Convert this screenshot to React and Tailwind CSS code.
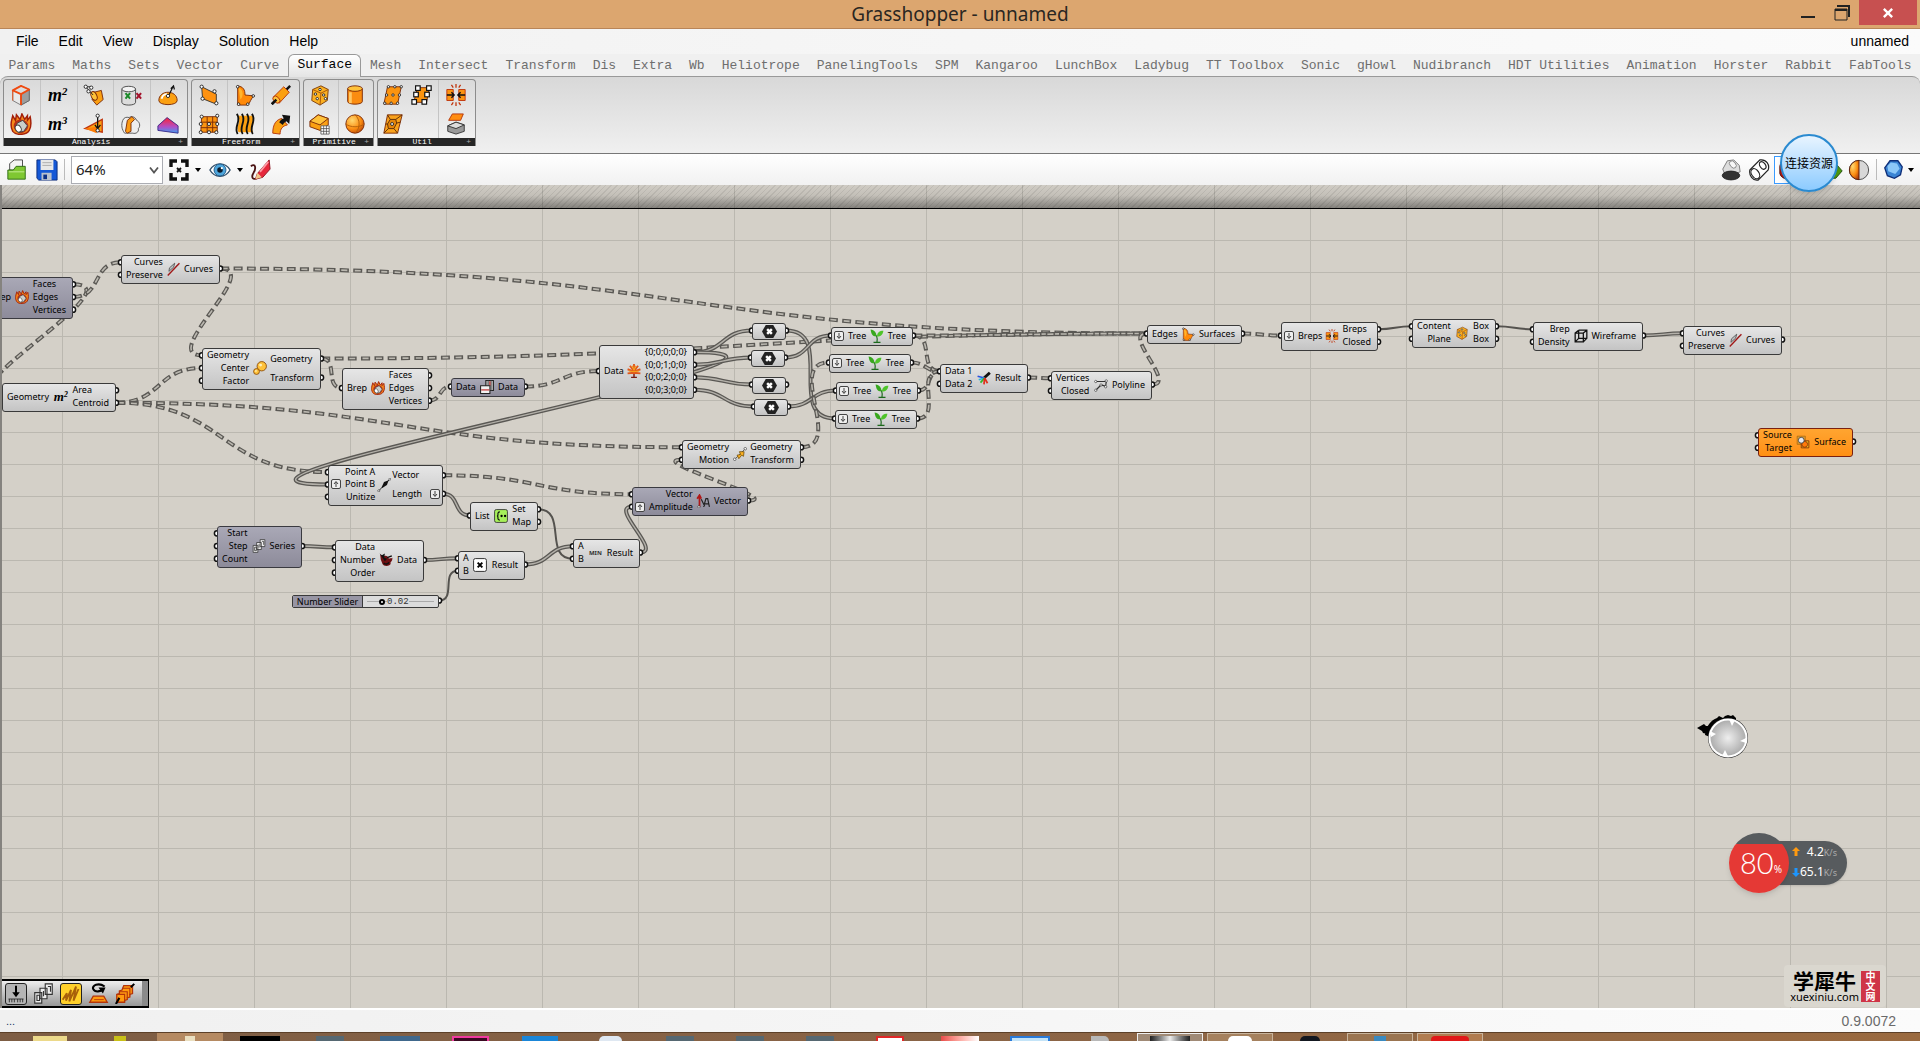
import React, { useState } from "react";

const TABS = [
  "Params", "Maths", "Sets", "Vector", "Curve", "Surface", "Mesh", "Intersect", "Transform",
  "Dis", "Extra", "Wb", "Heliotrope", "PanelingTools", "SPM", "Kangaroo", "LunchBox", "Ladybug",
  "TT Toolbox", "Sonic", "gHowl", "Nudibranch", "HDT Utilities", "Animation", "Horster",
  "Rabbit", "FabTools",
];

const MENUS = ["File", "Edit", "View", "Display", "Solution", "Help"];

const dots = (pts, r = 1.8) =>
  pts.map(([x, y]) => (
    <circle key={x + "-" + y} cx={x} cy={y} r={r} fill="#fff" stroke="#222" strokeWidth="1" />
  ));

// all drawings live on a 24x24 box
const ICONS = {
  boxEdges: (
    <g strokeLinejoin="round">
      <path d="M3 7l9-5 9 4v12l-9 5-9-5z" fill="#e9e9e9" stroke="#777" />
      <path d="M12 11l9-5v12l-9 5z" fill="#9d9d9d" stroke="#666" />
      <path d="M3 7l9-5 9 4-9 5zM12 11v12" fill="#ddd" stroke="#f04a10" strokeWidth="2" />
      <path d="M3 7v11" stroke="#f04a10" />
    </g>
  ),
  fire: (
    <g>
      <path d="M3 20C-1 13 2 8 3 3l3 5 1-6 4 5 2-6 3 6 3-4 0 5 3-4c1 5 2 10-1 15-3 5-14 6-18 1z" fill="#f58a1b" stroke="#a3200a" strokeWidth="1.6" />
      <path d="M4 14c0-5 5-7 8-7s8 3 8 7-4 8-8 8-8-3-8-8z" fill="#b8301a" />
      <path d="M8 11l6-3 5 6-4 6-6 1-3-5z" fill="#c9cdca" stroke="#444" />
      <ellipse cx="9" cy="17" rx="3" ry="4" transform="rotate(-30 9 17)" fill="#fff" stroke="#444" />
    </g>
  ),
  deconstruct: (
    <g>
      <path d="M12 9l8-2 2 10-7 6-5-6z" fill="#fba012" stroke="#7a2a08" />
      <ellipse cx="12" cy="13" rx="3" ry="5" transform="rotate(-25 12 13)" fill="#ffc23a" stroke="#7a2a08" />
      <path d="M3 3l8 9M3 3l5 0" stroke="#222" />
      {dots([[3, 3], [9, 4], [6, 8]])}
    </g>
  ),
  volume: (
    <g>
      <path d="M2 17L21 7v14z" fill="#fba012" stroke="#c0340c" strokeWidth="1.4" />
      <path d="M2 17l13-2 0 7z" fill="#ff7d05" />
      <path d="M16 3v14m-3-4l3 4 3-4" stroke="#111" fill="none" strokeWidth="1.4" />
      {dots([[16, 3], [16, 19]])}
    </g>
  ),
  inclusion: (
    <g>
      <path d="M2 6v14c0 4 15 4 15 0V6" fill="#dcdcdc" stroke="#444" />
      <ellipse cx="9.500" cy="5.500" rx="7.500" ry="3" fill="#f3f3f3" stroke="#444" />
      <path d="M6 10l5 6m0-6l-5 6" stroke="#1c8a2a" strokeWidth="2.200" />
      <path d="M18 10l5 6m0-6l-5 6" stroke="#a3122b" strokeWidth="2.200" />
    </g>
  ),
  domePoint: (
    <g>
      <path d="M2 18c0-12 20-12 20 0 0 6-20 6-20 0z" fill="#fba012" stroke="#7a2a08" />
      <path d="M5 16c1-4 4-5 6-5" stroke="#fff" strokeWidth="2" fill="none" />
      <path d="M13 12L18 2m-3 3l3-3 1 4" stroke="#111" fill="none" strokeWidth="1.300" />
      {dots([[12, 13]])}
    </g>
  ),
  bubbles: (
    <g>
      <path d="M3 8c-2 5-1 10 2 14l9 0c3 1 7-1 6-5 3-3 1-8-2-9-1-4-6-5-8-3-3-1-6 0-7 3z" fill="#eee" stroke="#555" />
      <path d="M8 8l5-4 3 3-4 4v9l-4 2-2-2z" fill="#fb9a12" stroke="#7a2a08" />
    </g>
  ),
  gradientSurf: (
    <g>
      <path d="M1 14l10-9 12 9v8L1 19z" fill="url(#gh-heat)" stroke="#3a2a88" />
    </g>
  ),
  quad: (
    <g>
      <path d="M4 3l16 8v11L5 16z" fill="#ff9210" stroke="#333" />
      {dots([[4, 3], [18, 8], [20, 21], [5, 16]])}
    </g>
  ),
  edgeSurf: (
    <g>
      <path d="M4 2c6 1 8 4 8 10l10 1c-4 3-4 7-7 10H4z" fill="#ff8a0a" stroke="#7a2a08" />
      <path d="M5 4c5 2 6 8 2 13z" fill="#ffb52d" />
      {dots([[4, 3], [21, 13], [5, 22], [15, 22]], 1.400)}
    </g>
  ),
  pipe: (
    <g>
      <path d="M2 22L22 2" stroke="#111" strokeWidth="2.600" />
      <path d="M4 14L15 3l6 6L10 21z" fill="#fba012" stroke="#b3340a" />
      <ellipse cx="7" cy="17" rx="3" ry="4.500" transform="rotate(-45 7 17)" fill="#ffc23a" stroke="#b3340a" />
      <path d="M2 22l5-5" stroke="#111" strokeWidth="2.600" />
    </g>
  ),
  gridSurf: (
    <g>
      <path d="M4 4h17v17H3z" fill="#fb9410" stroke="#7a2a08" />
      <path d="M10 4v17M16 4v17M3 10h18M3 16h18" stroke="#7a2a08" />
      {dots([[4, 4], [12, 12], [21, 3], [3, 21], [20, 21], [21, 12], [12, 21], [3, 12]], 1.700)}
    </g>
  ),
  waves: (
    <g>
      <path d="M4 3c5 6-3 12 1 18h16c-4-6 4-12-1-18z" fill="#fba012" />
      <path d="M3 1c6 7-4 14 1 22M8.500 1c6 7-4 14 1 22M14 1c6 7-4 14 1 22M19.500 1c6 7-4 14 1 22" stroke="#111" strokeWidth="2" fill="none" />
    </g>
  ),
  sweepArrow: (
    <g>
      <path d="M3 22C3 12 7 7 13 6l6 7c-5 1-8 4-8 10z" fill="#fba012" stroke="#b3340a" />
      <path d="M10 10c2-3 4-4 5-4l-2-4 9 1-1 9-3-3c-2 1-3 2-4 4z" fill="#111" />
    </g>
  ),
  die: (
    <g>
      <path d="M4 6l9-4 8 4-1 12-8 5-9-5z" fill="#fbb021" stroke="#7a3a08" />
      <path d="M4 6l9 4 8-4M13 10l-1 13" stroke="#a3500a" fill="none" />
      {dots([[7, 11], [9, 16], [12, 6], [16, 12], [18, 16]], 1.300)}
    </g>
  ),
  cylinder: (
    <g>
      <path d="M4 5v14c0 4 16 4 16 0V5" fill="#fb8c10" stroke="#7a2a08" />
      <path d="M7 9v12" stroke="#ffc766" strokeWidth="3" />
      <ellipse cx="12" cy="5" rx="8" ry="3" fill="#ffc23a" stroke="#7a2a08" />
    </g>
  ),
  boxGrid: (
    <g>
      <path d="M1 9l9-7 11 4v7l-9 6-11-4z" fill="#fba012" stroke="#7a2a08" />
      <path d="M1 9l11 4 9-7-11-4z" fill="#ffc23a" stroke="#7a2a08" />
      <path d="M13 14h9v9h-9zM16 14v9m3-9v9m-6-6h9m-9 3h9" fill="#fff" stroke="#444" strokeWidth=".8" />
    </g>
  ),
  sphere: (
    <g>
      <circle cx="12" cy="12" r="10" fill="url(#gh-orange)" stroke="#7a2a08" />
      <path d="M12 2c6 5 6 15 0 20M2 12c5 4 15 4 20 0" stroke="#b3600a" fill="none" />
    </g>
  ),
  utilDivide: (
    <g>
      <path d="M6 3h15l-4 19H2z" fill="#fb9410" stroke="#7a2a08" />
      {dots([[7, 3], [14, 3], [21, 3], [5, 12], [12, 12], [19, 12], [3, 21], [10, 21], [17, 21]], 1.300)}
    </g>
  ),
  utilFrames: (
    <g>
      <path d="M7 4h13l-3 16H3z" fill="#fb9410" stroke="#7a2a08" />
      {[[5, 2], [17, 2], [3, 9], [15, 9], [1, 17], [12, 17]].map(([x, y]) => (
        <rect key={x + "-" + y} x={x} y={y} width="5" height="5" fill="#fff" stroke="#111" strokeWidth="1.300" />
      ))}
    </g>
  ),
  capping: (
    <g>
      <path d="M2 6h7v12H2zM15 6h7v12h-7z" fill="#fb9410" stroke="#c0340c" />
      <path d="M2 12h8m-3-3l3 3-3 3M22 12h-8m3-3l-3 3 3 3" stroke="#111" fill="none" strokeWidth="1.500" />
      <path d="M12 0v4M7 1l2 3M17 1l-2 3M12 20v4M7 23l2-3M17 23l-2-3" stroke="#c0340c" strokeWidth="1.400" />
    </g>
  ),
  utilPanel: (
    <g>
      <path d="M6 2h16l-5 20H2z" fill="#f9a21b" stroke="#7a2a08" />
      <path d="M9 7h6l1 4-3 6H7l-1-5zM6 2l3 5M22 2l-7 5M16 11l4-1M13 17l4 5M7 17l-5 5M6 12l-2 0" fill="#e5860a" stroke="#5a2a08" />
      {dots([[11, 12]], 1.600)}
    </g>
  ),
  liftedBox: (
    <g>
      <path d="M8 1h12l-3 7H4z" fill="#ff8d12" stroke="#b3340a" />
      <path d="M3 14l9-4 9 3v7l-9 3-9-3z" fill="#999" stroke="#333" />
      <path d="M3 14l9 3 9-4-9-3z" fill="#ddd" stroke="#333" />
    </g>
  ),
  curveClean: (
    <g>
      <path d="M6 10l9-8-2 7-8 7zM12 14l8-9" fill="#bcc3c4" stroke="#555" strokeWidth="1.500" />
      <path d="M3 23L23 2" stroke="#a01a1a" strokeWidth="2.400" />
    </g>
  ),
  balls: (
    <g>
      <circle cx="15" cy="9" r="8" fill="#ffc23a" stroke="#8a4a08" strokeWidth="1.500" />
      <circle cx="6" cy="18" r="5" fill="#ffc23a" stroke="#8a4a08" strokeWidth="1.500" />
      <circle cx="13" cy="7" r="2.500" fill="#fff0b8" />
      <circle cx="5" cy="17" r="1.500" fill="#fff0b8" />
    </g>
  ),
  flip: (
    <g>
      <path d="M10 1h13v17H10z" fill="#bbb" stroke="#222" strokeWidth="1.800" />
      <path d="M14 1v17M19 1v17" stroke="#555" strokeWidth="1.500" />
      <path d="M17 2v8" stroke="#c02a2a" strokeWidth="2" />
      <path d="M1 10h16v13H1z" fill="#f2f2f2" stroke="#222" strokeWidth="1.800" />
      <path d="M2 17h14" stroke="#c02a2a" strokeWidth="2" />
    </g>
  ),
  tree: (
    <g>
      <path d="M12 24V10M7 23h10" stroke="#7a1a10" strokeWidth="2.500" />
      <path d="M12 15L1 16M12 13L1 9M12 12L5 3M12 12V0M12 12l7-9M12 13l11-4M12 15l11 1" stroke="#e0561a" strokeWidth="3.200" />
      <path d="M12 11l-3-8m3 8l3-8M12 13L3 12m9 1l9-1" stroke="#f6a01b" strokeWidth="2" />
    </g>
  ),
  sprout: (
    <g>
      <path d="M12 22c1-6 0-8-1-11M6 23h12" stroke="#1c6a1c" strokeWidth="2" fill="none" />
      <path d="M11 13C3 13 2 7 1 1c7 1 10 5 10 12z" fill="#38a81e" />
      <path d="M12 13c0-7 4-10 11-10-1 6-4 10-11 10z" fill="#4fc42a" />
    </g>
  ),
  moveArrow: (
    <g>
      <path d="M3 21L21 3" stroke="#555" strokeWidth="1.500" />
      <path d="M7 14l6-1-2-5h8l-1 8-3-2-5 6z" fill="#fbb021" stroke="#6a4a08" strokeWidth="1.300" />
      {dots([[3, 21], [21, 3]], 2.200)}
    </g>
  ),
  merge: (
    <g fill="none" strokeWidth="3">
      <path d="M12 12L22 3" stroke="#111" strokeWidth="5" />
      <path d="M13 12L1 9" stroke="#2b52e0" />
      <path d="M13 12L3 15" stroke="#28b7d8" />
      <path d="M13 12l-7 8" stroke="#34b52c" />
      <path d="M13 12l-1 11" stroke="#e0301c" />
      <path d="M13 12l5 9" stroke="#e0301c" />
    </g>
  ),
  polyline: (
    <g>
      <path d="M3 6h18l-1 8-8-2-9 9" fill="none" stroke="#333" strokeWidth="2" />
      {dots([[3, 6], [21, 5], [20, 15], [12, 12], [3, 21]], 2)}
    </g>
  ),
  wireframe: (
    <g fill="none" stroke="#111" strokeWidth="2.200">
      <path d="M2 7h14v15H2zM8 2h14v14l-6 6M2 7l6-5M16 7l6-5M8 2v14h14M8 16l-6 6" />
    </g>
  ),
  vectorPts: (
    <g>
      <path d="M3 22L21 3" stroke="#222" strokeWidth="1.600" />
      <path d="M8 16l4-9 8-3-3 8-8 5z" fill="#111" />
      {dots([[3, 22], [22, 2]], 1.800)}
    </g>
  ),
  setList: (
    <g>
      <rect x="1" y="1" width="22" height="22" rx="3" fill="#a6f05a" stroke="#333" strokeWidth="1.500" />
      <path d="M10 5c-6 0-1 7-5 7 4 0-1 7 5 7" fill="none" stroke="#111" strokeWidth="2" />
      <circle cx="13" cy="12" r="2" />
      <circle cx="19" cy="12" r="2" />
    </g>
  ),
  series: (
    <g fill="#eee" stroke="#333" strokeWidth="1.300">
      <path d="M14 1h8v12h-8zM8 6h8v12H8zM2 11h8v12H2z" />
      <path d="M4.500 14h3v6h-3zM12 9v6M17 4h3v6" fill="none" />
    </g>
  ),
  jitter: (
    <g>
      <path d="M2 2l5 4c5-3 9 0 10 4 3-2 4 0 6-2 0 8-4 6-3 10 0 5-12 6-14 1l-3-8z" fill="#6d1012" />
      <path d="M1 1l4 3 5-3-1 7 5 2-4 4z" fill="#111" />
      <path d="M14 8l8-3M8 17c3 3 8 2 9-1" stroke="#111" strokeWidth="2.500" fill="none" />
    </g>
  ),
  multiply: (
    <g>
      <rect x="1" y="1" width="22" height="22" rx="3" fill="#fff" stroke="#333" strokeWidth="1.700" />
      <path d="M8 8l8 8m0-8l-8 8" stroke="#000" strokeWidth="3.400" />
    </g>
  ),
  amplitude: (
    <g>
      <path d="M6 22V3M2 8l4-6 3 6" stroke="#b01818" strokeWidth="3" fill="none" />
      <path d="M9 9l6 12M13 22l4-14h3l3 14M15 17h7" stroke="#222" strokeWidth="2" fill="none" />
      {dots([[5, 22]], 2)}
    </g>
  ),
  morph: (
    <g>
      <path d="M2 2h14v14H2z" fill="#d99a30" stroke="#9a5a08" />
      <path d="M9 10h13v12H9z" fill="#ffcf1e" stroke="#7a2a08" strokeWidth="1.500" />
      <circle cx="15" cy="16" r="5" fill="#ff7a0a" stroke="#7a2a08" strokeWidth="1.300" />
      <circle cx="9" cy="9" r="5" fill="#e8eaf2" stroke="#333" strokeWidth="1.300" />
    </g>
  ),
  open: (
    <g>
      <path d="M4 12V5l5-4h9v12z" fill="#f4f4f4" stroke="#444" />
      <path d="M2 12h6l3-4h10v14H2z" fill="#7fc832" stroke="#2c6a14" />
      <path d="M3 14h17" stroke="#c9f09a" />
    </g>
  ),
  save: (
    <g>
      <path d="M1 1h20l2 2v20H3l-2-2z" fill="#1558d6" stroke="#0a2a7a" />
      <path d="M5 1h14v11H5z" fill="#e8e8e8" />
      <path d="M7 4h10M7 7h10" stroke="#aaa" />
      <path d="M6 15h11v8H6z" fill="#b9c0cc" />
      <path d="M8 17h4v5H8z" fill="#0c2f86" />
    </g>
  ),
  extents: (
    <g fill="none" stroke="#111" strokeWidth="3.400">
      <path d="M4 9V3h6M14 3h6v6M20 15v6h-6M10 21H4v-6" />
      <path d="M10 10l4 4m0-4l-4 4" strokeWidth="1.800" />
    </g>
  ),
  eye: (
    <g>
      <path d="M1 12C6 3 18 3 23 12 18 21 6 21 1 12z" fill="#fff" stroke="#33506a" strokeWidth="1.500" />
      <circle cx="12" cy="12" r="6.500" fill="#4ea6dc" stroke="#1c5a8a" />
      <circle cx="12" cy="12" r="3" fill="#0c1a2a" />
      <circle cx="14" cy="10" r="1.200" fill="#fff" />
    </g>
  ),
  pencil: (
    <g>
      <path d="M2 8c5-4 6 2 3 7s-1 8 4 6" fill="none" stroke="#4a1414" strokeWidth="2" />
      <path d="M9 16L22 1l1 10-8 9-8 2z" fill="#e6283c" stroke="#8a1420" />
      <path d="M9 15l5 5-7 2z" fill="#f2c48a" />
      <path d="M12 14l9-11" stroke="#ff9aa4" strokeWidth="2" />
    </g>
  ),
  cylShadow: (
    <g>
      <path d="M3 11l5-9 7-1 6 6 1 7-8 3-9-1z" fill="#ddd" stroke="#777" />
      <ellipse cx="14" cy="6" rx="3" ry="4.500" transform="rotate(-40 14 6)" fill="#f7f7f7" stroke="#888" />
      <ellipse cx="12" cy="18" rx="9.500" ry="4.800" fill="#333" stroke="#222" />
    </g>
  ),
  cylWire: (
    <g fill="#fff" stroke="#222" strokeWidth="1.300">
      <path d="M2 12L13 1c7-1 11 5 9 11L11 23C5 24 1 18 2 12z" />
      <ellipse cx="8" cy="16" rx="4" ry="6" transform="rotate(-35 8 16)" />
      <ellipse cx="16" cy="7" rx="3" ry="4.500" transform="rotate(-35 16 7)" />
    </g>
  ),
  cylRed: <path d="M2 8c0-8 18-8 20 0v8c-2 8-18 8-20 0z" fill="#c21a10" stroke="#4a0a08" />,
  cylGreen: <path d="M1 5h14l7 8-7 8H1z" fill="#4f9a10" stroke="#1c4a08" />,
  halfSphere: (
    <g>
      <circle cx="12" cy="12" r="10.500" fill="#d8d8d8" stroke="#444" />
      <path d="M12 1.500a10.500 10.500 0 000 21z" fill="url(#gh-orange)" stroke="#5a1a08" />
    </g>
  ),
  bluePoly: (
    <g>
      <path d="M8 2l9 0 5 7-2 9-7 4-8-3-3-9z" fill="#3a84d4" stroke="#0e2e78" strokeWidth="1.500" />
      <path d="M9 4l7 1 3 6-5 6-8-3-1-6z" fill="#8cc8f8" />
    </g>
  ),
  arrowDownBtn: (
    <g>
      <path d="M12 2v12" stroke="#000" strokeWidth="2.400" />
      <path d="M7.500 10h9L12 16z" />
      <path d="M3 18h18M4 18v4m3-4v4m3-4v4m4-4v4m3-4v4m3-4v4" stroke="#222" />
    </g>
  ),
  scribble: <path d="M2 19l5-8-1 9 6-13-2 14 8-18-3 17 6-14" fill="none" stroke="#a8600a" strokeWidth="2.200" />,
  refresh: (
    <g>
      <path d="M19 4C12-1 4 3 6 7s9 3 11 0" fill="none" stroke="#000" strokeWidth="2.400" />
      <path d="M12 5h8l-3 7z" />
      <path d="M6 15h12l4 7H2z" fill="#ff9a10" stroke="#b3340a" strokeWidth="1.500" />
      <path d="M7 19h11" stroke="#b3340a" />
    </g>
  ),
  layers: (
    <g>
      <path d="M10 3h10v9l-3 1v3l-3 1v2l-3 1v2H2v-9l3-1V9l3-1z" fill="#ff9a10" stroke="#b3340a" strokeWidth="1.500" />
      <path d="M8 6h9v8M5 10h9v7M2 13h9v8" fill="none" stroke="#b3340a" strokeWidth="1.300" />
      <path d="M1 24l4-7M18 5l4-4" stroke="#000" strokeWidth="2.400" />
    </g>
  ),
};

function Icon({ name, className = "size-[22px]" }) {
  return (
    <svg viewBox="0 0 24 24" className={`shrink-0 ${className}`} aria-hidden="true">
      {ICONS[name]}
    </svg>
  );
}

function Power({ n, className }) {
  return (
    <span className={`font-['Liberation_Serif',serif] font-bold italic leading-none text-black ${className}`}>
      m<sup className="text-[60%]">{n}</sup>
    </span>
  );
}

const RIBBON = [
  {
    name: "Analysis",
    width: "w-[185px]",
    cols: [["boxEdges", "fire"], ["m2", "m3"], ["deconstruct", "volume"], ["inclusion", "bubbles"], ["domePoint", "gradientSurf"]],
  },
  { name: "Freeform", width: "w-[109px]", cols: [["quad", "gridSurf"], ["edgeSurf", "waves"], ["pipe", "sweepArrow"]] },
  { name: "Primitive", width: "w-[71px]", cols: [["die", "boxGrid"], ["cylinder", "sphere"]] },
  { name: "Util", width: "w-[99px]", cols: [["utilDivide", "utilPanel", "utilFrames"], ["capping", "liftedBox"]] },
];

function RibbonGroup({ name, width, cols }) {
  return (
    <section className={`flex flex-col overflow-hidden rounded-t border border-[#8c8c8c] border-b-0 bg-linear-to-b from-[#dadada] to-[#f4f4f4] ${width}`}>
      <div className="flex flex-1 divide-x divide-[#c4c4c4]">
        {cols.map((icons, i) => (
          <div
            key={i}
            className={`grid grow grid-flow-col grid-rows-2 place-items-center pr-0.5 ${icons.length > 2 ? "grid-cols-2" : ""}`}
          >
            {icons.map((icon) => (
              <button key={icon} title={icon} className="flex size-6 items-center justify-center">
                {icon === "m2" || icon === "m3" ? <Power n={icon[1]} className="text-[18px]" /> : <Icon name={icon} />}
              </button>
            ))}
          </div>
        ))}
      </div>
      <div className="flex h-2 items-center bg-[#262626] font-['Liberation_Mono',monospace] text-[8px] leading-[8px] text-white">
        <span className="flex-1 text-center">{name}</span>
        <span className="pr-1 text-[#aaa]">+</span>
      </div>
    </section>
  );
}

const NODES = [
  { id: "brep0", x: -14, y: 92, w: 87, h: 42, tone: "dark", left: ["Brep"], icon: "fire", right: ["Faces", "Edges", "Vertices"] },
  { id: "curves1", x: 121, y: 70, w: 99, h: 29, left: ["Curves", "Preserve"], icon: "curveClean", right: ["Curves"] },
  { id: "area", x: 2, y: 198, w: 114, h: 29, left: ["Geometry"], icon: "m2", right: ["Area", "Centroid"] },
  { id: "scale", x: 202, y: 163, w: 119, h: 42, left: ["Geometry", "Center", "Factor"], icon: "balls", right: ["Geometry", "Transform"] },
  { id: "brep1", x: 342, y: 183, w: 87, h: 42, left: ["Brep"], icon: "fire", right: ["Faces", "Edges", "Vertices"] },
  { id: "flip", x: 451, y: 193, w: 74, h: 19, tone: "dark", left: ["Data"], icon: "flip", right: ["Data"] },
  { id: "explode", x: 599, y: 160, w: 95, h: 54, left: ["Data"], icon: "tree", right: ["{0;0;0;0;0}", "{0;0;1;0;0}", "{0;0;2;0;0}", "{0;0;3;0;0}"] },
  { id: "relay1", x: 752, y: 138, w: 34, h: 17, relay: true },
  { id: "relay2", x: 751, y: 165, w: 34, h: 17, relay: true },
  { id: "relay3", x: 752, y: 192, w: 34, h: 17, relay: true },
  { id: "relay4", x: 754, y: 214, w: 34, h: 17, relay: true },
  { id: "tree1", x: 831, y: 142, w: 82, h: 19, left: ["Tree"], icon: "sprout", right: ["Tree"], leftMark: [0, "down"] },
  { id: "tree2", x: 829, y: 169, w: 82, h: 19, left: ["Tree"], icon: "sprout", right: ["Tree"], leftMark: [0, "down"] },
  { id: "tree3", x: 836, y: 197, w: 82, h: 19, left: ["Tree"], icon: "sprout", right: ["Tree"], leftMark: [0, "down"] },
  { id: "tree4", x: 835, y: 225, w: 82, h: 19, left: ["Tree"], icon: "sprout", right: ["Tree"], leftMark: [0, "down"] },
  { id: "move", x: 682, y: 255, w: 119, h: 29, left: ["Geometry", "Motion"], icon: "moveArrow", right: ["Geometry", "Transform"] },
  { id: "merge", x: 940, y: 179, w: 88, h: 29, left: ["Data 1", "Data 2"], icon: "merge", right: ["Result"] },
  { id: "poly", x: 1051, y: 186, w: 101, h: 29, left: ["Vertices", "Closed"], icon: "polyline", right: ["Polyline"] },
  { id: "edge", x: 1147, y: 140, w: 95, h: 19, left: ["Edges"], icon: "edgeSurf", right: ["Surfaces"] },
  { id: "cap", x: 1281, y: 137, w: 97, h: 29, left: ["Breps"], icon: "capping", right: ["Breps", "Closed"], leftMark: [0, "down"] },
  { id: "bbox", x: 1412, y: 134, w: 84, h: 29, left: ["Content", "Plane"], icon: "die", right: ["Box", "Box"] },
  { id: "wire", x: 1533, y: 137, w: 110, h: 29, left: ["Brep", "Density"], icon: "wireframe", right: ["Wireframe"] },
  { id: "curves2", x: 1683, y: 141, w: 99, h: 29, left: ["Curves", "Preserve"], icon: "curveClean", right: ["Curves"] },
  { id: "morph", x: 1758, y: 243, w: 95, h: 29, tone: "orange", left: ["Source", "Target"], icon: "morph", right: ["Surface"] },
  { id: "vec", x: 328, y: 280, w: 115, h: 41, left: ["Point A", "Point B", "Unitize"], icon: "vectorPts", right: ["Vector", "Length"], leftMark: [1, "up"], rightMark: [1, "down"] },
  { id: "set", x: 470, y: 317, w: 68, h: 29, left: ["List"], icon: "setList", right: ["Set", "Map"] },
  { id: "series", x: 217, y: 341, w: 85, h: 42, tone: "dark", left: ["Start", "Step", "Count"], icon: "series", right: ["Series"] },
  { id: "jitter", x: 335, y: 355, w: 89, h: 42, left: ["Data", "Number", "Order"], icon: "jitter", right: ["Data"] },
  { id: "mult", x: 458, y: 366, w: 67, h: 29, left: ["A", "B"], icon: "multiply", right: ["Result"] },
  { id: "min", x: 573, y: 354, w: 67, h: 29, left: ["A", "B"], icon: "min", right: ["Result"] },
  { id: "amp", x: 632, y: 302, w: 116, h: 29, tone: "dark", left: ["Vector", "Amplitude"], icon: "amplitude", right: ["Vector"], leftMark: [1, "up"] },
  { id: "slider", x: 292, y: 410, w: 147, h: 13, slider: true },
];

// from, output row, to, input row, kind
const WIRES = [
  ["brep0", 0, "area", 0, "tree"],
  ["brep0", 1, "curves1", 0, "tree"],
  ["curves1", 0, "scale", 0, "tree"],
  ["curves1", 0, "edge", 0, "tree"],
  ["area", 1, "scale", 1, "tree"],
  ["area", 1, "move", 0, "tree"],
  ["area", 1, "vec", 0, "tree"],
  ["scale", 0, "edge", 0, "tree"],
  ["scale", 0, "brep1", 0, "tree"],
  ["brep1", 2, "flip", 0, "tree"],
  ["flip", 0, "explode", 0, "tree"],
  ["explode", 0, "relay1", 0, "list"],
  ["explode", 0, "vec", 1, "list"],
  ["explode", 1, "relay2", 0, "list"],
  ["explode", 2, "relay3", 0, "list"],
  ["explode", 3, "relay4", 0, "list"],
  ["relay1", 0, "tree4", 0, "list"],
  ["relay2", 0, "tree1", 0, "list"],
  ["relay4", 0, "tree3", 0, "list"],
  ["move", 0, "tree2", 0, "tree"],
  ["tree1", 0, "merge", 0, "tree"],
  ["tree1", 0, "edge", 0, "tree"],
  ["tree2", 0, "merge", 0, "tree"],
  ["tree3", 0, "merge", 0, "tree"],
  ["tree4", 0, "merge", 0, "tree"],
  ["merge", 0, "poly", 0, "tree"],
  ["poly", 0, "edge", 0, "tree"],
  ["edge", 0, "cap", 0, "tree"],
  ["cap", 0, "bbox", 0, "item"],
  ["bbox", 0, "wire", 0, "item"],
  ["wire", 0, "curves2", 0, "list"],
  ["vec", 0, "amp", 0, "tree"],
  ["vec", 1, "set", 0, "list"],
  ["set", 0, "min", 1, "item"],
  ["series", 0, "jitter", 0, "list"],
  ["jitter", 0, "mult", 0, "list"],
  ["slider", 0, "mult", 1, "item"],
  ["mult", 0, "min", 0, "list"],
  ["min", 0, "amp", 1, "list"],
  ["amp", 0, "move", 1, "tree"],
];

const byId = Object.fromEntries(NODES.map((n) => [n.id, n]));

function rowsOf(node, side) {
  if (node.relay) return 1;
  if (node.slider) return side === "right" ? 1 : 0;
  return node[side].length;
}

function port(node, side, row) {
  const step = (node.h - 4) / rowsOf(node, side);
  return {
    x: side === "left" ? node.x : node.x + node.w,
    y: node.y + 1 + step * (row + 0.5),
  };
}

function wirePath([from, out, to, inp]) {
  const a = port(byId[from], "right", out);
  const b = port(byId[to], "left", inp);
  const d = Math.hypot(b.x - a.x, b.y - a.y) / 2;
  return `M${a.x} ${a.y}C${a.x + d} ${a.y} ${b.x - d} ${b.y} ${b.x} ${b.y}`;
}

function Wires() {
  return (
    <svg className="absolute inset-0 size-full" fill="none" aria-hidden="true">
      {WIRES.map((wire, i) => {
        const d = wirePath(wire);
        if (wire[4] === "item") return <path key={i} d={d} stroke="#55534f" strokeWidth="2" />;
        if (wire[4] === "list")
          return (
            <g key={i}>
              <path d={d} stroke="#5a5854" strokeWidth="4" />
              <path d={d} stroke="#b4b1aa" strokeWidth="1.4" />
            </g>
          );
        return (
          <g key={i}>
            <path d={d} stroke="#5a5854" strokeWidth="4" strokeDasharray="9 4.3" />
            <path d={d} stroke="#bbb8b0" strokeWidth="1.6" strokeDasharray="6 7.3" strokeDashoffset="-1.5" />
          </g>
        );
      })}
      {NODES.flatMap((n) =>
        ["left", "right"].flatMap((side) =>
          Array.from({ length: rowsOf(n, side) }, (_, row) => {
            const p = port(n, side, row);
            return <circle key={n.id + side + row} cx={p.x} cy={p.y} r="2.600" fill="#fff" stroke="#111" strokeWidth="1.500" />;
          })
        )
      )}
    </svg>
  );
}

const TONES = {
  light: "border-[#3a3a3a] bg-linear-to-b from-[#e6e6e6] to-[#c4c4c4]",
  dark: "border-[#3a3a40] bg-linear-to-b from-[#a9a8b6] to-[#8d8b9a]",
  orange: "border-[#7a2010] bg-linear-to-b from-[#ffa530] to-[#ff8f12]",
};

function Mark({ dir }) {
  return (
    <svg viewBox="0 0 10 10" className="size-[10px] shrink-0" fill="none" stroke="#444" aria-hidden="true">
      <rect x=".5" y=".5" width="9" height="9" rx="1.500" fill="#eee" />
      {dir === "down" ? <path d="M5 2v5M3 5l2 2.500 2-2.500" /> : <path d="M5 8V3M3 5l2-2.500 2 2.500" />}
    </svg>
  );
}

function Labels({ rows, side, mark }) {
  const dir = mark ? mark[1] : null;
  return (
    <div className="flex h-full flex-col">
      {rows.map((row, i) => (
        <div key={i} className={`flex flex-1 items-center ${side === "left" ? "justify-end" : "justify-between"}`}>
          {mark && side === "left" && (mark[0] === i ? <span className="mr-1 flex flex-1"><Mark dir={dir} /></span> : null)}
          <span>{row}</span>
          {mark && side === "right" && mark[0] === i && <span className="ml-2 flex"><Mark dir={dir} /></span>}
        </div>
      ))}
    </div>
  );
}

function NodeIcon({ name }) {
  if (name === "m2") return <Power n="2" className="text-[13px]" />;
  if (name === "min") return <span className="text-[6px] font-bold text-[#333]">MIN</span>;
  return <Icon name={name} className="size-[14px]" />;
}

function Node({ node }) {
  const box = { left: node.x, top: node.y, width: node.w, height: node.h };
  const tone = TONES[node.tone || "light"];

  if (node.relay)
    return (
      <div style={box} className={`absolute flex items-center justify-center rounded-[3px] border ${tone}`}>
        <svg viewBox="0 0 16 16" className="size-[15px]" aria-hidden="true">
          <path d="M4 1h8l4 7-4 7H4L0 8z" fill="#222" />
          <path d="M5.500 5.500l5 5m0-5l-5 5" stroke="#fff" strokeWidth="2.600" />
        </svg>
      </div>
    );

  if (node.slider) return <SliderNode box={box} />;

  return (
    <div
      style={box}
      className={`absolute flex items-center justify-between rounded-[3px] border pb-0.5 whitespace-nowrap ${tone} ${node.leftMark ? "pl-0.5" : "pl-1"} ${node.rightMark ? "pr-0.5" : "pr-1.5"}`}
    >
      <Labels rows={node.left} side="left" mark={node.leftMark} />
      <NodeIcon name={node.icon} />
      <Labels rows={node.right} side="right" mark={node.rightMark} />
    </div>
  );
}

function SliderNode({ box }) {
  const [value, setValue] = useState(0.02);
  return (
    <div style={box} className="absolute flex items-stretch overflow-hidden rounded-[2px] border border-[#3a3a3a] bg-[#dcdcdc]">
      <label htmlFor="number-slider" className="flex w-[70px] items-center justify-center border-r border-[#3a3a3a] bg-[#9795a4] leading-[11px] whitespace-nowrap">
        Number Slider
      </label>
      <div className="relative flex flex-1 items-center px-1">
        <input
          id="number-slider"
          type="range"
          min="0"
          max="0.1"
          step="0.01"
          value={value}
          onChange={(e) => setValue(Number(e.target.value))}
          className="h-px w-full appearance-none bg-[#aaa] [&::-webkit-slider-thumb]:size-[6px] [&::-webkit-slider-thumb]:appearance-none [&::-webkit-slider-thumb]:rounded-full [&::-webkit-slider-thumb]:border-2 [&::-webkit-slider-thumb]:border-black [&::-webkit-slider-thumb]:bg-white"
        />
        <output htmlFor="number-slider" className="absolute left-6 bg-[#dcdcdc] font-['Liberation_Mono',monospace] text-[9px] leading-[10px] text-[#333]">
          {value.toFixed(2)}
        </output>
      </div>
    </div>
  );
}

function TitleBar() {
  return (
    <header className="relative flex h-[29px] shrink-0 items-center justify-center border-b border-[#b98558] bg-[#dca66f]">
      <h1 className="font-['Noto_Sans',sans-serif] text-[19px] leading-none text-[#2a2622]">Grasshopper - unnamed</h1>
      <div className="absolute top-0 right-[3px] flex h-[25px]">
        <button aria-label="Minimize" className="flex w-[34px] items-end justify-center pb-[7px]">
          <span className="h-[2px] w-[14px] bg-[#222]" />
        </button>
        <button aria-label="Restore" className="flex w-[34px] items-center justify-center">
          <svg viewBox="0 0 16 16" className="size-[16px]" fill="none" stroke="#222" aria-hidden="true">
            <path d="M3 1h12v11" strokeWidth="2" />
            <path d="M1 4h12v11H1z" fill="#dca66f" />
            <path d="M1 5h12" strokeWidth="2" />
          </svg>
        </button>
        <button aria-label="Close" className="flex w-[58px] items-center justify-center bg-[#c75050]">
          <svg viewBox="0 0 12 12" className="size-[10px]" aria-hidden="true">
            <path d="M1 1l10 10M11 1L1 11" stroke="#fff" strokeWidth="2.800" />
          </svg>
        </button>
      </div>
    </header>
  );
}

function MenuBar() {
  return (
    <nav className="flex h-[25px] shrink-0 items-center gap-5 bg-linear-to-r from-[#f1f1f1] to-[#fbfbfb] pr-[11px] pl-4 text-[14px] text-black">
      {MENUS.map((m) => (
        <button key={m}>{m}</button>
      ))}
      <span className="ml-auto">unnamed</span>
    </nav>
  );
}

function TabBar({ active, onSelect }) {
  return (
    <div role="tablist" className="flex h-[22px] shrink-0 items-end bg-[#f0f0f0] font-['Liberation_Mono',monospace] text-[13px] text-[#6e6e6e]">
      {TABS.map((tab) => (
        <button
          key={tab}
          role="tab"
          aria-selected={tab === active}
          onClick={() => onSelect(tab)}
          className={
            tab === active
              ? "relative z-10 -mb-px h-[23px] grow rounded-t-md border border-b-0 border-[#999] bg-linear-to-b from-white to-[#e4e4e4] px-1.5 pb-0.5 text-black"
              : "h-5 grow px-1.5 whitespace-nowrap"
          }
        >
          {tab}
        </button>
      ))}
    </div>
  );
}

const Caret = () => <span className="border-x-[3px] border-t-4 border-x-transparent border-t-black" />;

function Toolbar() {
  return (
    <div className="flex h-8 shrink-0 items-center border-t border-[#777] bg-linear-to-b from-white to-[#f1f1f1] pr-1.5 pl-1.5">
      <button aria-label="Open"><Icon name="open" className="size-[22px]" /></button>
      <button aria-label="Save" className="ml-2"><Icon name="save" className="size-[22px]" /></button>
      <span className="mx-1.5 h-[21px] w-px bg-[#bbb]" />
      <div className="relative flex items-center">
        <select aria-label="Zoom" className="h-[28px] w-[92px] appearance-none border border-[#abadb3] bg-white pl-1 font-['Noto_Sans',sans-serif] text-[15px] text-[#222]">
          <option>64%</option>
          <option>100%</option>
        </select>
        <svg viewBox="0 0 10 8" className="pointer-events-none absolute right-1 h-2 w-[10px]" fill="none" aria-hidden="true">
          <path d="M1 1.500l4 5 4-5" stroke="#555" strokeWidth="1.800" />
        </svg>
      </div>
      <button aria-label="Zoom extents" className="ml-1 flex items-center gap-1"><Icon name="extents" className="size-6" /><Caret /></button>
      <button aria-label="Preview" className="ml-2 flex items-center gap-1.5"><Icon name="eye" /><Caret /></button>
      <button aria-label="Sketch" className="ml-1.5"><Icon name="pencil" /></button>
      <div className="ml-auto flex items-center">
        <button aria-label="No preview" className="mr-1.5"><Icon name="cylShadow" /></button>
        <button aria-label="Wire preview"><Icon name="cylWire" /></button>
        <button aria-label="Shaded preview" className="ml-1 flex h-[28px] w-[30px] items-center justify-center border border-[#3a9bff] bg-white"><Icon name="cylRed" /></button>
        <button aria-label="Selected preview" className="ml-[18px]"><Icon name="cylGreen" /></button>
        <button aria-label="Document preview" className="ml-1"><Icon name="halfSphere" /></button>
        <span className="mx-1.5 h-[21px] w-px bg-[#bbb]" />
        <button aria-label="Mesh quality" className="flex items-center gap-1"><Icon name="bluePoly" className="size-[21px]" /><Caret /></button>
      </div>
    </div>
  );
}

function CanvasTools() {
  return (
    <div className="absolute bottom-0 left-[2px] flex h-[29px] items-center gap-1.5 border-y-2 border-r border-black bg-linear-to-b from-[#eee] to-[#999] pl-[3px]">
      <button aria-label="Align" className="rounded-[3px] border border-[#222] bg-[#b5b5b5]"><Icon name="arrowDownBtn" className="size-[20px]" /></button>
      <button aria-label="Series"><Icon name="series" className="size-[21px]" /></button>
      <button aria-label="Sketch" className="rounded-[3px] border border-[#222] bg-[#ffd02a]"><Icon name="scribble" className="size-[20px]" /></button>
      <button aria-label="Recompute"><Icon name="refresh" className="size-[21px]" /></button>
      <button aria-label="Layers"><Icon name="layers" className="size-[21px]" /></button>
      <span className="h-full w-[6px] bg-[#8a8a8a]" />
    </div>
  );
}

function Compass() {
  return (
    <svg viewBox="0 0 54 44" className="absolute top-[530px] left-[1697px] h-[44px] w-[54px]" aria-hidden="true">
      <path d="M0 13l7-4 2 2 3 0-2 3 0 5-4-1-1-2z" />
      <path d="M8 20C9 11 14 5 20 3l2-2 4 2 2-2 3-1 3 1 2-1 3 3 0 3-10 0-9 4-7 12z" />
      <circle cx="31" cy="23" r="20" fill="#333" />
      <circle cx="31" cy="23" r="18.500" fill="url(#gh-steel)" stroke="#fff" strokeWidth="2" />
      <path d="M32 4l6 1-3 6zM13 16l6 3-5 3zM49 23l-6 3 6 2zM25 41l6 0-3-6z" fill="#fff" />
    </svg>
  );
}

function SpeedRow({ color, up, value }) {
  return (
    <div className="flex items-center justify-between whitespace-nowrap">
      <svg viewBox="0 0 8 10" className="h-[10px] w-2" fill={color} aria-hidden="true">
        {up ? <path d="M4 0l4 4H5.500v5h-3V4H0z" /> : <path d="M4 10L0 6h2.500V1h3v5H8z" />}
      </svg>
      <span>
        {value}
        <span className="text-[9px] text-[#aaa]">K/s</span>
      </span>
    </div>
  );
}

function SpeedWidget() {
  return (
    <div className="absolute top-[648px] left-[1729px] flex h-[60px] items-center">
      <div className="z-10 flex size-[60px] items-center justify-center overflow-hidden rounded-full bg-linear-to-b from-[#575b5e] from-18% to-[#e53935] to-18% pl-1 text-white shadow-md">
        <span className="font-['Lato',sans-serif] text-[29px] font-light">80</span>
        <span className="self-end pb-[18px] text-[10px]">%</span>
      </div>
      <div className="-ml-[14px] flex h-[44px] w-[72px] flex-col justify-center rounded-r-full bg-[#575b5e] pr-2.5 pb-0.5 pl-[17px] font-['Noto_Sans',sans-serif] text-[12px] leading-[19px] text-white shadow">
        <SpeedRow up color="#ff9a10" value="4.2" />
        <SpeedRow color="#1c96ff" value="65.1" />
      </div>
    </div>
  );
}

function Watermark() {
  return (
    <div className="absolute right-[34px] bottom-[1px] flex h-[42px] items-center gap-0.5 rounded bg-[#dad7cf] pr-1.5 pl-[6px]">
      <div className="flex flex-col items-center">
        <span className="font-['Noto_Sans_CJK_SC',sans-serif] text-[21px] leading-[21px] font-bold text-black">学犀牛</span>
        <span className="font-['Noto_Sans',sans-serif] text-[11px] leading-[12px] text-black">xuexiniu.com</span>
      </div>
      <span className="flex h-[31px] w-[19px] flex-col items-center justify-center bg-[#cf3547] font-['Noto_Sans_CJK_SC',sans-serif] text-[10px] leading-[10px] font-bold text-white">
        <span>中</span>
        <span>文</span>
        <span>网</span>
      </span>
    </div>
  );
}

function Canvas() {
  return (
    <main className="relative min-h-0 flex-1 overflow-hidden bg-[#d4d0c8] bg-[linear-gradient(to_right,#bbb8b0_1px,transparent_1px),linear-gradient(to_bottom,#bbb8b0_1px,transparent_1px)] bg-[size:96px_100%,100%_32px] bg-[position:62px_0,0_23px] font-['Noto_Sans',sans-serif] text-[9px] leading-[12px] text-black">
      <div className="h-6 border-b border-black bg-[linear-gradient(to_bottom,rgba(0,0,0,0.02),rgba(0,0,0,0.08)_45%,rgba(0,0,0,0.38)),repeating-linear-gradient(135deg,rgba(0,0,0,0.07)_0_1px,transparent_1px_4px)]" />
      <Wires />
      {NODES.map((n) => (
        <Node key={n.id} node={n} />
      ))}
      <Compass />
      <SpeedWidget />
      <Watermark />
      <div className="absolute inset-y-0 left-0 w-[2px] bg-[#85837f]" />
      <CanvasTools />
    </main>
  );
}

const TASKS = [
  { label: "Explorer", art: "w-[34px] bg-[#ecd98a]" },
  { label: "Editor", art: "w-[12px] bg-[#c9c018]" },
  { label: "Viewer", tile: "bg-[#b58a62]", art: "w-[10px] bg-[#eadfc0]" },
  { label: "Console", art: "w-[40px] bg-black" },
  { label: "Render", art: "w-[28px] bg-[#566872]" },
  { label: "Modeler", art: "w-[40px] bg-[#40688c]" },
  { label: "InDesign", art: "w-[37px] border-2 border-b-0 border-[#f03aa0] bg-[#3a0a22]" },
  { label: "Folder", art: "w-[36px] bg-[#1a86d8]" },
  { label: "Browser", art: "w-[23px] rounded-t-full bg-[#dfe8f2]" },
  { label: "Render 2", art: "w-[28px] bg-[#566872]" },
  { label: "Render 3", art: "w-[28px] bg-[#566872]" },
  { label: "Render 4", art: "w-[28px] bg-[#566872]" },
  { label: "Reader", art: "w-[28px] border-2 border-b-0 border-[#e02828] bg-white" },
  { label: "Paint", art: "w-[38px] bg-linear-to-r from-[#e84a4a] to-white" },
  { label: "Window", art: "w-[40px] border-2 border-b-0 border-[#2a7ad8] bg-[#c4e4f8]" },
  { label: "Disc", art: "w-[18px] rounded-tr-full bg-[#b8b8b8]" },
  { label: "Rhino", tile: "border border-b-0 border-[#eee] bg-[#a08a76]", art: "w-[40px] bg-linear-to-r from-[#222] via-[#eee] to-[#222]" },
  { label: "Safari", tile: "border border-b-0 border-[#c8b49c] bg-[#a5815e]", art: "w-[24px] rounded-t-full bg-white" },
  { label: "QQ", art: "w-[20px] rounded-t-full bg-[#141820]" },
  { label: "Sketch", tile: "border border-b-0 border-[#c8b49c] bg-[#9a7450]", art: "w-[12px] bg-[#3a8ac0]" },
  { label: "Recorder", tile: "border border-b-0 border-[#c8b49c] bg-[#b07c50]", art: "w-[38px] rounded-t bg-[#e01818]" },
];

function Taskbar() {
  return (
    <footer className="flex h-[9px] shrink-0 overflow-hidden border-t border-[#5c4028] bg-linear-to-r from-[#7d5d44] via-[#8a6446] to-[#9a6a40] pl-[15px]">
      {TASKS.map((t) => (
        <button key={t.label} aria-label={t.label} className={`mx-0.5 flex w-[66px] items-end justify-center ${t.tile || ""}`}>
          <span className={`h-[5px] ${t.art}`} />
        </button>
      ))}
    </footer>
  );
}

function Defs() {
  return (
    <svg className="absolute size-0" aria-hidden="true">
      <defs>
        <linearGradient id="gh-heat" x1="0" y1="0" x2="0" y2="1">
          <stop offset=".1" stopColor="#f0284a" />
          <stop offset=".6" stopColor="#b050c8" />
          <stop offset="1" stopColor="#3aa0f0" />
        </linearGradient>
        <radialGradient id="gh-orange" cx=".35" cy=".3" r=".8">
          <stop offset="0" stopColor="#ffd870" />
          <stop offset=".6" stopColor="#fb8c10" />
          <stop offset="1" stopColor="#b3400a" />
        </radialGradient>
        <radialGradient id="gh-steel">
          <stop offset="0" stopColor="#eee" />
          <stop offset="1" stopColor="#aaa" />
        </radialGradient>
      </defs>
    </svg>
  );
}

export default function App() {
  const [tab, setTab] = useState("Surface");

  return (
    <div className="relative flex h-screen flex-col overflow-hidden bg-[#f0f0f0] font-['Liberation_Sans',Arial,sans-serif]">
      <Defs />
      <TitleBar />
      <MenuBar />
      <TabBar active={tab} onSelect={setTab} />
      <div className="flex h-[77px] shrink-0 gap-[3px] rounded-t-lg border-t border-[#999] bg-linear-to-b from-[#d8d8d8] to-[#f0f0f0] px-[3px] pt-[2px] pb-[7px]">
        {RIBBON.map((g) => (
          <RibbonGroup key={g.name} {...g} />
        ))}
      </div>
      <Toolbar />
      <Canvas />
      <div className="flex h-6 shrink-0 items-center justify-between border-t-2 border-white bg-linear-to-r from-[#f0f0f0] to-[#fbfbfb] pr-6 pl-1.5 text-[14px] text-[#6a6a6a]">
        <span className="text-[11px] text-[#1a3a6a]">...</span>
        <span>0.9.0072</span>
      </div>
      <Taskbar />
      <button className="absolute top-[134px] right-[82px] flex size-[58px] items-center justify-center rounded-full border-2 border-[#2a8ad0] bg-linear-to-b from-[#e8f4ff] to-[#8ccbff] font-['Noto_Sans_CJK_SC',sans-serif] text-[12px] whitespace-nowrap text-black shadow-md">
        连接资源
      </button>
    </div>
  );
}
